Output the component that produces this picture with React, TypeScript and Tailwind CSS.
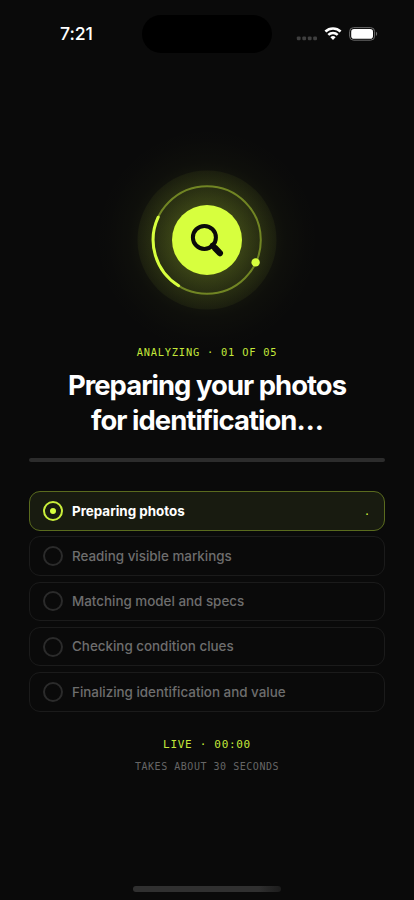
import { clsx } from 'clsx';

const steps = [
  'Preparing photos',
  'Reading visible markings',
  'Matching model and specs',
  'Checking condition clues',
  'Finalizing identification and value',
];

const ACTIVE_STEP = 0;

function StatusBar() {
  return (
    <header className="flex h-[67px] w-full shrink-0 items-center">
      <div className="w-[142px] pl-[60px] pt-px text-[17.7px] font-medium leading-none tracking-[-0.1px] text-white [font-variation-settings:'opsz'_14]">
        7:21
      </div>
      <div className="h-[38px] w-[130px] rounded-full bg-black" />
      <div className="flex flex-1 items-center pl-[24px]">
        <svg width="82" height="16" viewBox="0 0 82 16" fill="none">
          <g fill="#3f3f3f">
            <rect x="0.8" y="10.4" width="3.8" height="3.8" rx="1.2" />
            <rect x="6.3" y="10.4" width="3.8" height="3.8" rx="1.2" />
            <rect x="11.8" y="10.4" width="3.8" height="3.8" rx="1.2" />
            <rect x="17.2" y="10.4" width="3.8" height="3.8" rx="1.2" />
          </g>
          <g stroke="#fff" strokeWidth="2.5">
            <path d="M29.4 5.5a10.9 10.9 0 0 1 15.2 0" />
            <path d="M32.3 8.9a6.7 6.7 0 0 1 9.4 0" />
          </g>
          <path d="M34.4 11.3a3.7 3.7 0 0 1 5.2 0L37 14.1z" fill="#fff" />
          <rect x="53.6" y="1.6" width="25" height="12.6" rx="4" stroke="#6b6b6b" />
          <rect x="55.2" y="3.1" width="21.8" height="9.6" rx="2.8" fill="#fff" />
          <path d="M80 5.8c1.6.7 1.6 3.5 0 4.2z" fill="#6b6b6b" />
        </svg>
      </div>
    </header>
  );
}

function Scanner() {
  return (
    <svg className="mt-[33px] shrink-0" width="280" height="280" viewBox="-140 -140 280 280" fill="none">
      <defs>
        <radialGradient id="halo" gradientUnits="userSpaceOnUse" cx="0" cy="0" r="120">
          <stop offset="0.45" stopColor="#d7ff3e" stopOpacity="0.065" />
          <stop offset="0.65" stopColor="#d7ff3e" stopOpacity="0.02" />
          <stop offset="0.85" stopColor="#d7ff3e" stopOpacity="0.003" />
          <stop offset="1" stopColor="#d7ff3e" stopOpacity="0" />
        </radialGradient>
        <radialGradient id="disc" gradientUnits="userSpaceOnUse" cx="0" cy="0" r="70">
          <stop offset="0.48" stopColor="#d7ff3e" stopOpacity="0.18" />
          <stop offset="0.75" stopColor="#d7ff3e" stopOpacity="0.09" />
          <stop offset="1" stopColor="#d7ff3e" stopOpacity="0.045" />
        </radialGradient>
      </defs>
      <circle r="120" fill="url(#halo)" />
      <circle r="69.5" fill="url(#disc)" />
      <circle r="53.8" stroke="#d7ff3e" strokeOpacity="0.42" strokeWidth="2" />
      <path d="M-48.8 -22.8A53.8 53.8 0 0 0 -28.4 45.7" stroke="#d7ff3e" strokeWidth="3" strokeLinecap="round" />
      <circle cx="48.6" cy="22.4" r="4.2" fill="#d7ff3e" />
      <circle r="35" fill="#d7ff3e" />
      <g stroke="#0a0a0a" strokeLinecap="round">
        <circle cx="-2.6" cy="-2.6" r="11.5" strokeWidth="4" />
        <path d="M5 5l3 3" strokeWidth="4.4" />
        <path d="M8 8l4.9 5.2" strokeWidth="6.2" />
      </g>
    </svg>
  );
}

function StepRow({ label, active }: { label: string; active: boolean }) {
  return (
    <li
      className={clsx(
        'flex h-[39.6px] items-center rounded-[11px] border pl-[13px] pr-[14px]',
        active ? 'border-[#5a6b1e] bg-[#181b10]' : 'border-[#1b1b1b] bg-[#0a0a0a]',
      )}
    >
      <span
        className={clsx(
          'flex size-5 items-center justify-center rounded-full border-2',
          active ? 'border-[#c9ee3b]' : 'border-[#2b2b2b]',
        )}
      >
        {active && <span className="size-[6.5px] rounded-full bg-[#d7ff3e]" />}
      </span>
      <span
        className={clsx(
          'ml-[9px] flex-1 pt-px text-[13.4px] leading-none',
          active ? 'font-bold text-white' : 'font-medium text-[#6e6e6e]',
        )}
      >
        {label}
      </span>
      {active && (
        <span className="pt-[2px] font-['DejaVu_Sans_Mono',monospace] text-[10px] leading-none text-[#d7ff3e]">.</span>
      )}
    </li>
  );
}

export default function App() {
  return (
    <main className="flex h-[900px] w-full flex-col items-center overflow-hidden bg-[#0a0a0a] font-['Inter',sans-serif]">
      <StatusBar />
      <Scanner />
      <p className="-mt-[35px] whitespace-pre font-['DejaVu_Sans_Mono',monospace] text-[10.4px] leading-[14px] tracking-[0.78px] text-[#c4e83a]">
        ANALYZING · 01 OF 05
      </p>
      <h1 className="mt-[9px] text-center text-[27.4px] font-bold leading-[34.5px] tracking-[-0.95px] text-white [font-variation-settings:'opsz'_14]">
        Preparing your photos
        <br />
        for identification…
      </h1>
      <div className="mt-[21px] h-[4px] w-[356px] shrink-0 rounded-full bg-[#2c2c2c]" />
      <ul className="mt-[29px] flex w-[356px] shrink-0 flex-col gap-[5.7px]">
        {steps.map((label, i) => (
          <StepRow key={label} label={label} active={i === ACTIVE_STEP} />
        ))}
      </ul>
      <p className="mt-[26px] font-['DejaVu_Sans_Mono',monospace] text-[11px] leading-[14px] tracking-[0.7px] text-[#c4e83a]">
        LIVE · 00:00
      </p>
      <p className="mt-[8px] font-['DejaVu_Sans_Mono',monospace] text-[10px] leading-[14px] tracking-[0.53px] text-[#666666]">
        TAKES ABOUT 30 SECONDS
      </p>
      <div className="mb-[8px] mt-auto h-[6px] w-[148px] shrink-0 rounded-full bg-gradient-to-r from-[#303030] from-85% to-[#1c1c1c]" />
    </main>
  );
}
